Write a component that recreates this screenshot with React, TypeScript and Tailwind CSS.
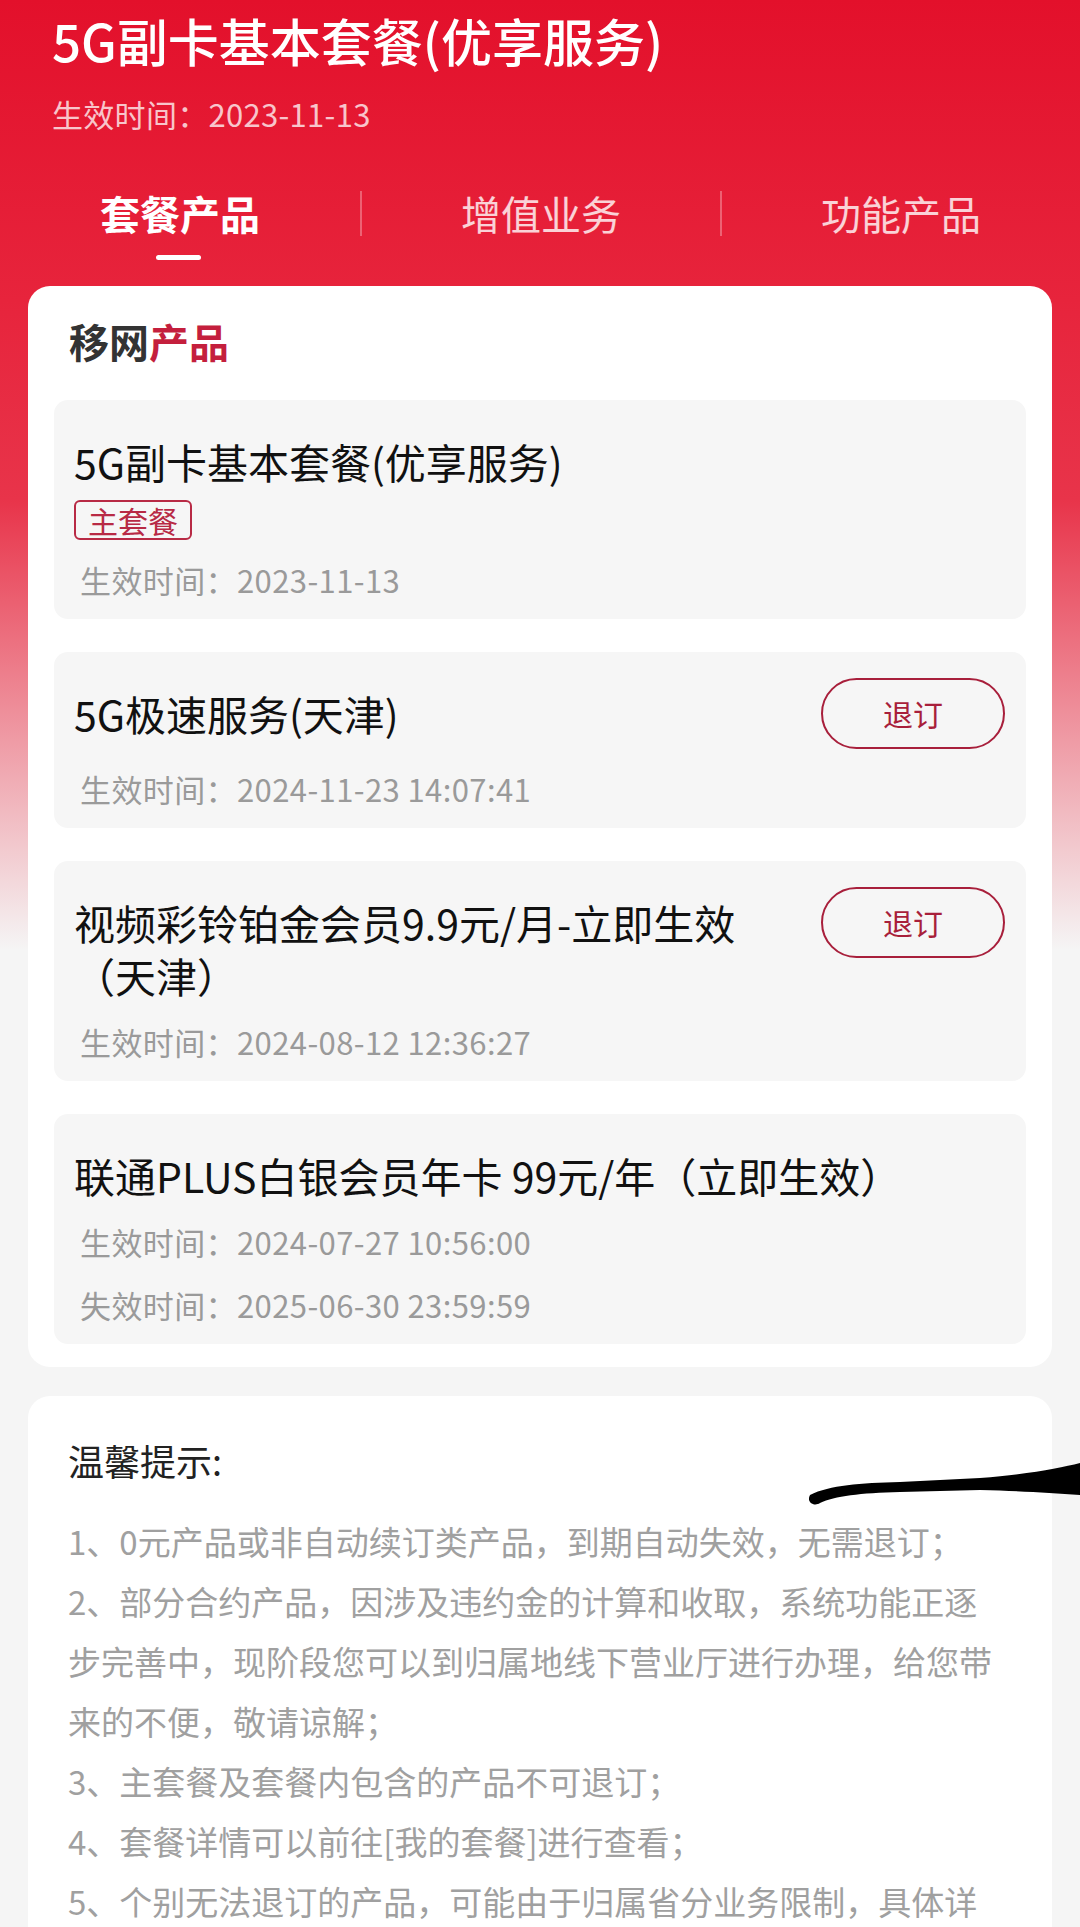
const items = [
  {
    title: "5G副卡基本套餐(优享服务)",
    tag: "主套餐",
    cancel: false,
    dates: ["生效时间：2023-11-13"],
  },
  {
    title: "5G极速服务(天津)",
    cancel: true,
    dates: ["生效时间：2024-11-23 14:07:41"],
  },
  {
    title: "视频彩铃铂金会员9.9元/月-立即生效（天津）",
    cancel: true,
    dates: ["生效时间：2024-08-12 12:36:27"],
  },
  {
    title: "联通PLUS白银会员年卡 99元/年（立即生效）",
    cancel: false,
    dates: ["生效时间：2024-07-27 10:56:00", "失效时间：2025-06-30 23:59:59"],
  },
];

const tips = [
  "1、0元产品或非自动续订类产品，到期自动失效，无需退订；",
  "2、部分合约产品，因涉及违约金的计算和收取，系统功能正逐步完善中，现阶段您可以到归属地线下营业厅进行办理，给您带来的不便，敬请谅解；",
  "3、主套餐及套餐内包含的产品不可退订；",
  "4、套餐详情可以前往[我的套餐]进行查看；",
  "5、个别无法退订的产品，可能由于归属省分业务限制，具体详情请咨询归属地营业厅。",
];

const tabs = ["套餐产品", "增值业务", "功能产品"];

export default function App() {
  return (
    <div className="relative w-[1080px] min-h-[1927px] overflow-hidden bg-[linear-gradient(180deg,#e3102b_0px,#e7243c_300px,#e8344a_500px,#f5f5f5_950px,#f5f5f5_100%)] font-['Noto_Sans_CJK_SC',sans-serif]">
      {/* Header */}
      <div className="px-[52px] pt-[10px]">
        <h1 className="text-[51px] leading-[60px] font-medium text-white">
          5G副卡基本套餐(优享服务)
        </h1>
        <p className="mt-[24px] text-[31px] leading-[40px] tracking-[0.3px] text-white/75">
          生效时间：2023-11-13
        </p>
      </div>

      {/* Tabs */}
      <div className="mt-[51px] flex h-[56px] items-center">
        {tabs.map((tab, i) => (
          <div key={tab} className="flex flex-1 items-center">
            {i > 0 && <div className="h-[45px] w-[2px] bg-white/30" />}
            <span
              className={
                i === 0
                  ? "flex-1 text-center text-[40px] leading-[56px] font-bold text-white"
                  : "flex-1 text-center text-[40px] leading-[56px] text-white/80"
              }
            >
              {tab}
            </span>
          </div>
        ))}
      </div>
      <div className="mt-[14px] flex w-[356px] justify-center">
        <div className="h-[5px] w-[45px] rounded-full bg-white" />
      </div>

      {/* Product card */}
      <div className="mx-[28px] mt-[26px] rounded-[22px] bg-white px-[26px] pt-[31px] pb-[23px]">
        <h2 className="pl-[15px] text-[40px] leading-[48px] font-bold text-[#333]">
          移网<span className="text-[#c41f3d]">产品</span>
        </h2>

        <div className="mt-[35px] flex flex-col gap-[33px]">
          {items.map((item) => (
            <div
              key={item.title}
              className="rounded-[14px] bg-[#f6f6f6] pl-[20px] pr-[21px] pt-[26px] pb-[19px]"
            >
              <div className="flex items-start">
                <div className="mt-[9px] flex-1 text-[41px] leading-[53px] text-[#111]">
                  {item.title}
                </div>
                {item.cancel && (
                  <button className="ml-[24px] flex h-[71px] w-[184px] shrink-0 items-center justify-center rounded-full border-2 border-[#a81f3b] text-[30px] text-[#a81f3b]">
                    退订
                  </button>
                )}
              </div>
              {item.tag && (
                <div className="mt-[12px] inline-flex h-[40px] items-center rounded-[6px] border-2 border-[#b82a45] px-[12px] text-[30px] leading-none text-[#b82a45]">
                  {item.tag}
                </div>
              )}
              <div className="mt-[20px] flex flex-col gap-[23px] pl-[6px]">
                {item.dates.map((d) => (
                  <div
                    key={d}
                    className="text-[31px] leading-[40px] tracking-[0.4px] text-[#9a9a9a]"
                  >
                    {d}
                  </div>
                ))}
              </div>
            </div>
          ))}
        </div>
      </div>

      {/* Tips card */}
      <div className="mx-[28px] mt-[29px] rounded-[22px] bg-white pl-[40px] pr-[48px] pt-[39px] pb-[40px]">
        <h3 className="text-[36px] leading-[50px] text-[#222]">温馨提示:</h3>
        <div className="mt-[26px] text-[33px] leading-[60px] text-[#a0a0a0]">
          {tips.map((t) => (
            <p key={t}>{t}</p>
          ))}
        </div>
      </div>

      {/* pen scribble over the screenshot */}
      <svg
        className="absolute left-[800px] top-[1455px]"
        width="280"
        height="60"
        viewBox="0 0 280 60"
      >
        <path
          d="M10 40 C30 30 60 28 100 27 L180 23 C230 19 260 13 280 8 L280 40 C250 38 220 36 180 35 L100 37 C60 38 35 41 20 48 C14 52 6 47 10 40 Z"
          fill="#000"
        />
      </svg>
    </div>
  );
}
